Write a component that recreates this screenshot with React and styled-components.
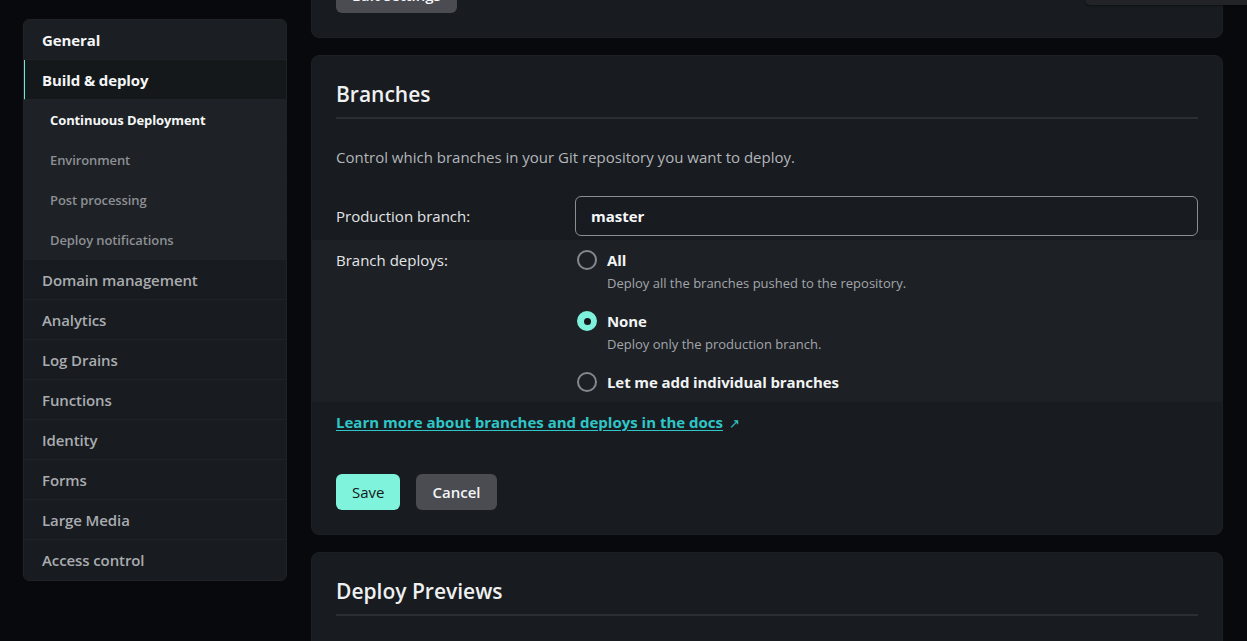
import React, { useState } from "react";
import styled, { createGlobalStyle } from "styled-components";

const GlobalStyle = createGlobalStyle`
  html, body {
    margin: 0;
    padding: 0;
    background: #07090c;
    overflow: hidden;
  }
  body {
    font-family: "Open Sans", "Noto Sans", sans-serif;
    color: #e6e8ea;
  }
  * { box-sizing: border-box; }
`;

const Page = styled.div`
  position: relative;
  display: flex;
  align-items: flex-start;
  gap: 24px;
  padding-left: 23px;
  height: 641px;
  overflow: hidden;
`;

const Sidebar = styled.nav`
  width: 264px;
  flex: none;
  margin-top: 19px;
  background: #181b1f;
  border: 1px solid #1f2226;
  border-radius: 6px;
  overflow: hidden;
`;

const NavItem = styled.div`
  height: 40px;
  display: flex;
  align-items: center;
  padding-left: ${(p) => (p.$sub ? "25px" : "17px")};
  border-bottom: 1px solid ${(p) => (p.$last ? "transparent" : "#1f2327")};
  border-left: 2px solid ${(p) => (p.$active ? "#6ee8d2" : "transparent")};
  margin-left: -1px;
  background: ${(p) =>
    p.$active ? "#15181b" : p.$sub ? "#1e2125" : p.$top ? "#1b1e22" : "#181b1f"};
  font-size: ${(p) => (p.$sub ? "13px" : "15px")};
  font-weight: ${(p) => (p.$strong ? 700 : 600)};
  color: ${(p) => (p.$strong ? "#f4f6f7" : p.$sub ? "#8c8f94" : "#a9acb0")};
  letter-spacing: -0.1px;
`;

const Main = styled.main`
  width: 912px;
  flex: none;
  margin-top: -48px;
  display: flex;
  flex-direction: column;
  gap: 17px;
`;

const Card = styled.section`
  background: #181b1f;
  border: 1px solid #1c1f23;
  border-radius: 8px;
  padding: 24px;
  min-height: ${(p) => (p.$tall ? "240px" : "0")};
`;

const Title = styled.h2`
  margin: 0;
  font-size: 21px;
  line-height: 28px;
  font-weight: 600;
  color: #eef0f1;
  padding-bottom: 9px;
  border-bottom: 2px solid #2b2e33;
`;

const Description = styled.p`
  margin: 27px 0 0;
  font-size: 15px;
  line-height: 22px;
  color: #b3b6ba;
`;

const FieldRow = styled.div`
  display: grid;
  grid-template-columns: 239px 1fr;
  align-items: ${(p) => (p.$top ? "start" : "center")};
  margin-top: ${(p) => (p.$gap ? "28px" : "0")};
`;

const FieldLabel = styled.label`
  font-size: 15px;
  line-height: 20px;
  color: #e3e5e7;
`;

const Input = styled.div`
  height: 40px;
  border: 1px solid #8a8d92;
  border-radius: 6px;
  display: flex;
  align-items: center;
  padding-left: 15px;
  font-size: 15px;
  font-weight: 700;
  color: #f6f7f8;
`;

const Band = styled.div`
  margin: 4px -25px 0;
  padding: 10px 25px;
  background: #1d2024;
`;

const Options = styled.div`
  display: flex;
  flex-direction: column;
  gap: 19px;
  padding-left: 2px;
`;

const Option = styled.div`
  display: grid;
  grid-template-columns: 20px 1fr;
  column-gap: 10px;
  cursor: pointer;
`;

const Radio = styled.span`
  width: 20px;
  height: 20px;
  border-radius: 50%;
  border: 2px solid ${(p) => (p.$checked ? "#7ef1dc" : "#85888d")};
  background: ${(p) => (p.$checked ? "#7ef1dc" : "transparent")};
  display: flex;
  align-items: center;
  justify-content: center;
  &::after {
    content: "";
    width: 7px;
    height: 7px;
    border-radius: 50%;
    background: ${(p) => (p.$checked ? "#15181b" : "transparent")};
  }
`;

const OptionTitle = styled.span`
  font-size: 15px;
  line-height: 20px;
  font-weight: 700;
  color: #f1f3f4;
  letter-spacing: -0.1px;
`;

const OptionHint = styled.span`
  grid-column: 2;
  margin-top: 4px;
  font-size: 13px;
  line-height: 18px;
  color: #a3a6ab;
`;

const DocLink = styled.a`
  display: inline-block;
  margin-top: 10px;
  font-size: 15px;
  line-height: 20px;
  font-weight: 700;
  color: #2fc6c8;
  text-decoration: underline;
  text-underline-offset: 2px;
  cursor: pointer;
`;

const Arrow = styled.span`
  display: inline-block;
  margin-left: 6px;
  font-size: 13px;
  color: #2fc6c8;
`;

const Actions = styled.div`
  display: flex;
  gap: 16px;
  margin-top: 41px;
`;

const Button = styled.button`
  height: 36px;
  padding: 0 16px;
  border: none;
  border-radius: 6px;
  font-family: inherit;
  font-size: 15px;
  font-weight: ${(p) => (p.$primary ? 500 : 600)};
  background: ${(p) => (p.$primary ? "#80f3dc" : "#4a4c52")};
  color: ${(p) => (p.$primary ? "#15181b" : "#f4f5f6")};
  cursor: pointer;
`;

const Menu = styled.div`
  position: absolute;
  top: 0;
  right: 0;
  width: 162px;
  height: 5px;
  background: #222327;
  border-bottom-left-radius: 5px;
  box-shadow: 0 1px 2px rgba(0, 0, 0, 0.4);
`;

const nav = [
  { label: "General", top: true },
  { label: "Build & deploy", active: true, strong: true },
  { label: "Continuous Deployment", sub: true, strong: true },
  { label: "Environment", sub: true },
  { label: "Post processing", sub: true },
  { label: "Deploy notifications", sub: true },
  { label: "Domain management" },
  { label: "Analytics" },
  { label: "Log Drains" },
  { label: "Functions" },
  { label: "Identity" },
  { label: "Forms" },
  { label: "Large Media" },
  { label: "Access control" },
];

const options = [
  { id: "all", title: "All", hint: "Deploy all the branches pushed to the repository." },
  { id: "none", title: "None", hint: "Deploy only the production branch." },
  { id: "some", title: "Let me add individual branches" },
];

export default function App() {
  const [branch, setBranch] = useState("none");
  return (
    <>
      <GlobalStyle />
      <Page>
        <Sidebar>
          {nav.map((item, i) => (
            <NavItem
              key={item.label}
              $top={item.top}
              $sub={item.sub}
              $active={item.active}
              $strong={item.strong || item.top}
              $last={i === nav.length - 1}
            >
              {item.label}
            </NavItem>
          ))}
        </Sidebar>
        <Main>
          <Card>
            <Button>Edit settings</Button>
          </Card>
          <Card>
            <Title>Branches</Title>
            <Description>Control which branches in your Git repository you want to deploy.</Description>
            <FieldRow $gap>
              <FieldLabel>Production branch:</FieldLabel>
              <Input>master</Input>
            </FieldRow>
            <Band>
              <FieldRow $top>
                <FieldLabel>Branch deploys:</FieldLabel>
                <Options>
                  {options.map((o) => (
                    <Option key={o.id} onClick={() => setBranch(o.id)}>
                      <Radio $checked={branch === o.id} />
                      <OptionTitle>{o.title}</OptionTitle>
                      {o.hint && <OptionHint>{o.hint}</OptionHint>}
                    </Option>
                  ))}
                </Options>
              </FieldRow>
            </Band>
            <div>
              <DocLink>Learn more about branches and deploys in the docs</DocLink>
              <Arrow>↗</Arrow>
            </div>
            <Actions>
              <Button $primary>Save</Button>
              <Button>Cancel</Button>
            </Actions>
          </Card>
          <Card $tall>
            <Title>Deploy Previews</Title>
          </Card>
        </Main>
        <Menu />
      </Page>
    </>
  );
}
